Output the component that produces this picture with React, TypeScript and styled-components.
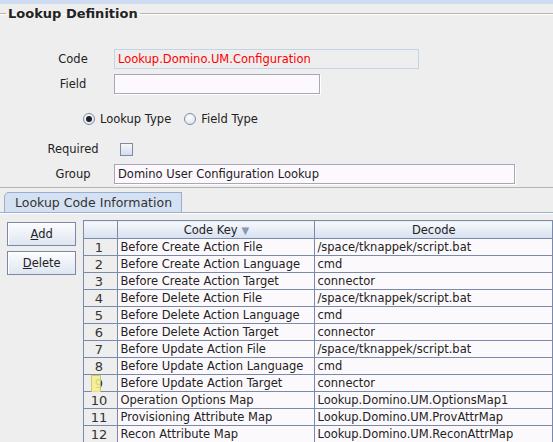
import React from 'react';
import styled, { createGlobalStyle } from 'styled-components';

const GlobalStyle = createGlobalStyle`
  html, body {
    margin: 0;
    padding: 0;
    background: #eeeeee;
    overflow: hidden;
  }
  body {
    font-family: "DejaVu Sans", "Liberation Sans", sans-serif;
    font-size: 11.5px;
    color: #222;
  }
`;

const Page = styled.div`
  width: 553px;
  height: 442px;
  overflow: hidden;
  background: #eeeeee;
`;

const TopStrip = styled.div`
  height: 4px;
  background: #cedcf1;
`;

const Group = styled.fieldset`
  margin: 2px 0 0 0;
  padding: 0 0 3px 0;
  border: none;
  border-top: 1px solid #b4b4b4;
  box-shadow: inset 0 1px 0 #ffffff;
  border-bottom: 1px solid #b4b4b4;
`;

const Legend = styled.legend`
  margin-left: 6px;
  padding: 0 2px;
  font-weight: bold;
  font-size: 13px;
  color: #222;
`;

const Form = styled.div`
  display: grid;
  grid-template-columns: 106px 1fr;
  column-gap: 8px;
  row-gap: 5px;
  padding-top: 28px;
  align-items: center;
`;

const Label = styled.span`
  text-align: center;
  padding-left: 40px;
`;

const TextBox = styled.div<{ $w: number; $readonly?: boolean }>`
  width: ${p => p.$w}px;
  height: 20px;
  box-sizing: border-box;
  line-height: 18px;
  padding: 0 3px;
  background: ${p => (p.$readonly ? '#eeeeee' : '#fcf8fd')};
  border: 1px solid ${p => (p.$readonly ? '#c5d3e8' : '#a7a7b5')};
  box-shadow: ${p => (p.$readonly ? 'none' : '1px 1px 0 #ffffff')};
  color: ${p => (p.$readonly ? '#ff0000' : '#222')};
`;

const RadioRow = styled.div`
  grid-column: 1 / 3;
  display: flex;
  align-items: center;
  gap: 6px;
  height: 13px;
  padding: 13px 0 9px 83px;
`;

const RadioItem = styled.label`
  display: flex;
  align-items: center;
  gap: 5px;
  margin-right: 7px;
`;

const RadioDot = styled.span<{ $checked?: boolean }>`
  width: 12px;
  height: 12px;
  border-radius: 50%;
  box-sizing: border-box;
  border: 1px solid #7d8ba6;
  background: radial-gradient(circle at 40% 35%, #ffffff, #d6deea);
  display: flex;
  align-items: center;
  justify-content: center;
  &::after {
    content: '';
    display: ${p => (p.$checked ? 'block' : 'none')};
    width: 6px;
    height: 6px;
    border-radius: 50%;
    background: #222;
  }
`;

const Check = styled.span`
  margin: 4px 0 3px 6px;
  width: 13px;
  height: 13px;
  box-sizing: border-box;
  border: 1px solid #7d8ba6;
  background: linear-gradient(#f4f7fb, #d4dced);
`;

const TabStrip = styled.div`
  margin-top: 4px;
  padding-left: 4px;
  display: flex;
  border-bottom: 1px solid #9aaed0;
`;

const Tab = styled.div`
  height: 19px;
  line-height: 19px;
  padding: 0 9px 0 10px;
  font-size: 12.5px;
  background: #d4e1f3;
  border: 1px solid #9aaed0;
  border-bottom: none;
  border-top-left-radius: 5px;
  color: #333;
`;

const Content = styled.div`
  display: flex;
  align-items: flex-start;
  gap: 7px;
  padding: 6px 0 0 7px;
  border-top: 1px solid #ffffff;
`;

const Buttons = styled.div`
  display: flex;
  flex-direction: column;
  gap: 5px;
  width: 71px;
  margin-top: 2px;
`;

const Btn = styled.button`
  height: 24px;
  font-family: inherit;
  font-size: 11.5px;
  color: #222;
  background: linear-gradient(#fbfcfe, #dfe6f1);
  border: 1px solid #7b89a4;
  box-shadow: inset 1px 1px 0 #ffffff;
  padding: 0;
  u {
    text-decoration: underline;
  }
`;

const Table = styled.table`
  border-collapse: collapse;
  width: 480px;
  table-layout: fixed;
  border-left: 1px solid #7b8aa8;
  border-top: 1px solid #7b8aa8;
`;

const HeadCell = styled.th<{ $w?: number }>`
  width: ${p => (p.$w ? `${p.$w}px` : 'auto')};
  height: 17px;
  padding: 0;
  font-weight: normal;
  font-size: 11.5px;
  color: #222;
  background: linear-gradient(#f7f9fc, #d7e1f0);
  border: 1px solid #7b8aa8;
  text-align: center;
`;

const Arrow = styled.span`
  color: #8a98b4;
  font-size: 10px;
  margin-left: 4px;
`;

const NumCell = styled.td`
  position: relative;
  height: 16px;
  padding: 0 4px 0 0;
  background: #eeeeee;
  border: 1px solid #7b8aa8;
  text-align: center;
  font-size: 13px;
  line-height: 15px;
  color: #333;
`;

const Cell = styled.td`
  height: 16px;
  padding: 0 0 0 2px;
  background: #fcf9fd;
  border: 1px solid #7b8aa8;
  white-space: nowrap;
  overflow: hidden;
  line-height: 15px;
`;

const Marker = styled.span`
  position: absolute;
  left: 7px;
  top: 0;
  width: 8px;
  height: 16px;
  background: #f6f08a;
  border: 1px solid #c9c25a;
  opacity: 0.85;
`;

const rows: [string, string][] = [
  ['Before Create Action File', '/space/tknappek/script.bat'],
  ['Before Create Action Language', 'cmd'],
  ['Before Create Action Target', 'connector'],
  ['Before Delete Action File', '/space/tknappek/script.bat'],
  ['Before Delete Action Language', 'cmd'],
  ['Before Delete Action Target', 'connector'],
  ['Before Update Action File', '/space/tknappek/script.bat'],
  ['Before Update Action Language', 'cmd'],
  ['Before Update Action Target', 'connector'],
  ['Operation Options Map', 'Lookup.Domino.UM.OptionsMap1'],
  ['Provisioning Attribute Map', 'Lookup.Domino.UM.ProvAttrMap'],
  ['Recon Attribute Map', 'Lookup.Domino.UM.ReconAttrMap'],
];

const App = () => (
  <Page>
    <GlobalStyle />
    <TopStrip />
    <Group>
      <Legend>Lookup Definition</Legend>
      <Form>
        <Label>Code</Label>
        <TextBox $w={305} $readonly>Lookup.Domino.UM.Configuration</TextBox>
        <Label>Field</Label>
        <TextBox $w={206} />
        <RadioRow>
          <RadioItem>
            <RadioDot $checked />
            Lookup Type
          </RadioItem>
          <RadioItem>
            <RadioDot />
            Field Type
          </RadioItem>
        </RadioRow>
        <Label>Required</Label>
        <Check />
        <Label>Group</Label>
        <TextBox $w={401}>Domino User Configuration Lookup</TextBox>
      </Form>
    </Group>
    <TabStrip>
      <Tab>Lookup Code Information</Tab>
    </TabStrip>
    <Content>
      <Buttons>
        <Btn>
          <u>A</u>dd
        </Btn>
        <Btn>
          <u>D</u>elete
        </Btn>
      </Buttons>
      <Table>
        <thead>
          <tr>
            <HeadCell $w={33} />
            <HeadCell $w={196}>
              Code Key<Arrow>▼</Arrow>
            </HeadCell>
            <HeadCell>Decode</HeadCell>
          </tr>
        </thead>
        <tbody>
          {rows.map(([key, decode], i) => (
            <tr key={key}>
              <NumCell>
                {i === 8 && <Marker />}
                {i + 1}
              </NumCell>
              <Cell>{key}</Cell>
              <Cell>{decode}</Cell>
            </tr>
          ))}
        </tbody>
      </Table>
    </Content>
  </Page>
);

export default App;
